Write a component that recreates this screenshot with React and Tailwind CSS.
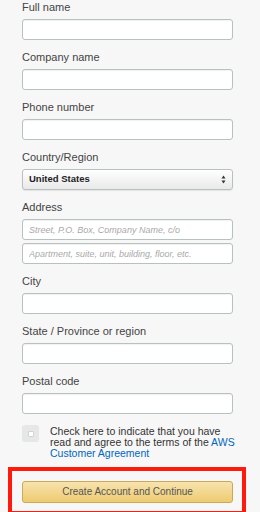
import React from 'react';

const font = { fontFamily: '"Liberation Sans", Arial, sans-serif' };

const Field = ({ label, children }) => (
  <div className="flex flex-col">
    <label className="text-[11px] leading-[14px] text-[#444] mb-[5px]">{label}</label>
    {children}
  </div>
);

const TextInput = ({ placeholder }) => (
  <input
    type="text"
    placeholder={placeholder}
    className="w-[211px] h-[21px] bg-white border border-[#b6c1c0] rounded-[3px] px-[6px] text-[9px] outline-none shadow-[inset_0_1px_1px_rgba(0,0,0,0.06)] placeholder:italic placeholder:text-[#a9a9a9]"
  />
);

export default function App() {
  const fields = ['Full name', 'Company name', 'Phone number'];
  const after = ['City', 'State / Province or region', 'Postal code'];

  return (
    <div className="w-[260px] h-[512px] bg-[#f7f7f7] overflow-hidden" style={font}>
      <div className="pl-[22px] flex flex-col gap-[10px]">
        {fields.map((f) => (
          <Field key={f} label={f}>
            <TextInput />
          </Field>
        ))}

        <Field label="Country/Region">
          <div className="w-[211px] h-[21px] border border-[#b6c1c0] rounded-[3px] bg-gradient-to-b from-white to-[#e9e9e9] flex items-center justify-between px-[6px] shadow-[0_1px_1px_rgba(0,0,0,0.08)]">
            <span className="text-[9.5px] font-bold text-[#222]">United States</span>
            <svg width="5" height="9" viewBox="0 0 5 9">
              <path d="M2.5 0.5 L4.5 3.5 L0.5 3.5 Z" fill="#333" />
              <path d="M2.5 8.5 L4.5 5.5 L0.5 5.5 Z" fill="#333" />
            </svg>
          </div>
        </Field>

        <Field label="Address">
          <div className="flex flex-col gap-[3px]">
            <TextInput placeholder="Street, P.O. Box, Company Name, c/o" />
            <TextInput placeholder="Apartment, suite, unit, building, floor, etc." />
          </div>
        </Field>

        {after.map((f) => (
          <Field key={f} label={f}>
            <TextInput />
          </Field>
        ))}
      </div>

      <div className="pl-[22px] mt-[11px] flex items-start gap-[11px]">
        <div className="w-[17px] h-[17px] bg-[#e6e8e8] rounded-[3px] flex items-center justify-center shrink-0">
          <div className="w-[6px] h-[6px] bg-white border border-[#d0d4d4] rounded-[1px]" />
        </div>
        <p className="text-[10.5px] leading-[11px] text-[#333] w-[195px] mt-[1px] whitespace-nowrap">
          Check here to indicate that you have
          <br />
          read and agree to the terms of the <span className="text-[#0066c0]">AWS</span>
          <br />
          <span className="text-[#0066c0]">Customer Agreement</span>
        </p>
      </div>

      <div className="ml-[8px] mt-[8px] w-[238px] h-[48px] border-4 border-[#ff1a0d] pl-[10px] pt-[7px]">
        <button className="w-[211px] h-[22px] rounded-[3px] border border-[#c9a95a] bg-gradient-to-b from-[#f8e3ad] to-[#eecb6f] text-[10px] text-[#555]">
          Create Account and Continue
        </button>
      </div>
    </div>
  );
}
